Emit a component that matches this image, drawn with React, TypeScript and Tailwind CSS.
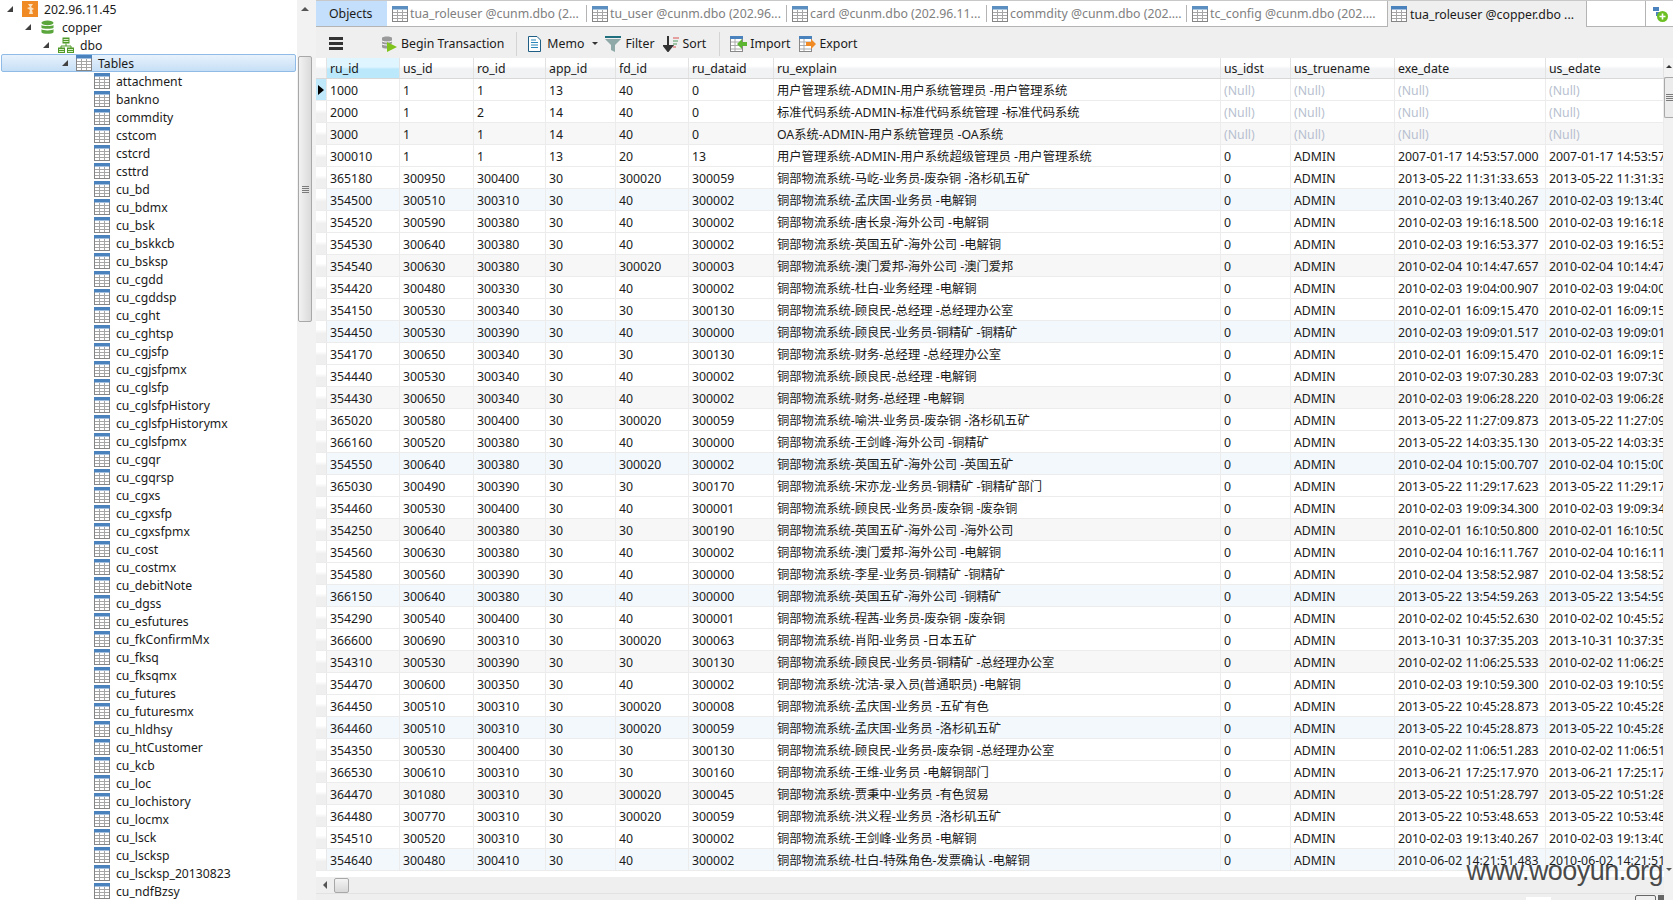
import { Fragment } from "react";

const font = "[font-family:'Noto_Sans','Noto_Sans_CJK_SC',sans-serif]";

const tables = [
  "attachment", "bankno", "commdity", "cstcom", "cstcrd", "csttrd", "cu_bd", "cu_bdmx", "cu_bsk", "cu_bskkcb",
  "cu_bsksp", "cu_cgdd", "cu_cgddsp", "cu_cght", "cu_cghtsp", "cu_cgjsfp", "cu_cgjsfpmx", "cu_cglsfp",
  "cu_cglsfpHistory", "cu_cglsfpHistorymx", "cu_cglsfpmx", "cu_cgqr", "cu_cgqrsp", "cu_cgxs", "cu_cgxsfp",
  "cu_cgxsfpmx", "cu_cost", "cu_costmx", "cu_debitNote", "cu_dgss", "cu_esfutures", "cu_fkConfirmMx", "cu_fksq",
  "cu_fksqmx", "cu_futures", "cu_futuresmx", "cu_hldhsy", "cu_htCustomer", "cu_kcb", "cu_loc", "cu_lochistory",
  "cu_locmx", "cu_lsck", "cu_lscksp", "cu_lscksp_20130823", "cu_ndfBzsy",
];

const tabs = [
  "tua_roleuser @cunm.dbo (2...",
  "tu_user @cunm.dbo (202.96...",
  "card @cunm.dbo (202.96.11...",
  "commdity @cunm.dbo (202....",
  "tc_config @cunm.dbo (202....",
];

const prefix = "铜部物流系统-";

const rows: string[][] = [
  ["1000", "1", "1", "13", "40", "0", "用户管理系统-ADMIN-用户系统管理员 -用户管理系统", "", "", "", ""],
  ["2000", "1", "2", "14", "40", "0", "标准代码系统-ADMIN-标准代码系统管理 -标准代码系统", "", "", "", ""],
  ["3000", "1", "1", "14", "40", "0", "OA系统-ADMIN-用户系统管理员 -OA系统", "", "", "", ""],
  ["300010", "1", "1", "13", "20", "13", "用户管理系统-ADMIN-用户系统超级管理员 -用户管理系统", "0", "ADMIN", "2007-01-17 14:53:57.000", "2007-01-17 14:53:57.000"],
  ["365180", "300950", "300400", "30", "300020", "300059", prefix + "马屹-业务员-废杂铜 -洛杉矶五矿", "0", "ADMIN", "2013-05-22 11:31:33.653", "2013-05-22 11:31:33.653"],
  ["354500", "300510", "300310", "30", "40", "300002", prefix + "孟庆国-业务员 -电解铜", "0", "ADMIN", "2010-02-03 19:13:40.267", "2010-02-03 19:13:40.267"],
  ["354520", "300590", "300380", "30", "40", "300002", prefix + "唐长泉-海外公司 -电解铜", "0", "ADMIN", "2010-02-03 19:16:18.500", "2010-02-03 19:16:18.500"],
  ["354530", "300640", "300380", "30", "40", "300002", prefix + "英国五矿-海外公司 -电解铜", "0", "ADMIN", "2010-02-03 19:16:53.377", "2010-02-03 19:16:53.377"],
  ["354540", "300630", "300380", "30", "300020", "300003", prefix + "澳门爱邦-海外公司 -澳门爱邦", "0", "ADMIN", "2010-02-04 10:14:47.657", "2010-02-04 10:14:47.657"],
  ["354420", "300480", "300330", "30", "40", "300002", prefix + "杜白-业务经理 -电解铜", "0", "ADMIN", "2010-02-03 19:04:00.907", "2010-02-03 19:04:00.907"],
  ["354150", "300530", "300340", "30", "30", "300130", prefix + "顾良民-总经理 -总经理办公室", "0", "ADMIN", "2010-02-01 16:09:15.470", "2010-02-01 16:09:15.470"],
  ["354450", "300530", "300390", "30", "40", "300000", prefix + "顾良民-业务员-铜精矿 -铜精矿", "0", "ADMIN", "2010-02-03 19:09:01.517", "2010-02-03 19:09:01.517"],
  ["354170", "300650", "300340", "30", "30", "300130", prefix + "财务-总经理 -总经理办公室", "0", "ADMIN", "2010-02-01 16:09:15.470", "2010-02-01 16:09:15.470"],
  ["354440", "300530", "300340", "30", "40", "300002", prefix + "顾良民-总经理 -电解铜", "0", "ADMIN", "2010-02-03 19:07:30.283", "2010-02-03 19:07:30.283"],
  ["354430", "300650", "300340", "30", "40", "300002", prefix + "财务-总经理 -电解铜", "0", "ADMIN", "2010-02-03 19:06:28.220", "2010-02-03 19:06:28.220"],
  ["365020", "300580", "300400", "30", "300020", "300059", prefix + "喻洪-业务员-废杂铜 -洛杉矶五矿", "0", "ADMIN", "2013-05-22 11:27:09.873", "2013-05-22 11:27:09.873"],
  ["366160", "300520", "300380", "30", "40", "300000", prefix + "王剑峰-海外公司 -铜精矿", "0", "ADMIN", "2013-05-22 14:03:35.130", "2013-05-22 14:03:35.130"],
  ["354550", "300640", "300380", "30", "300020", "300002", prefix + "英国五矿-海外公司 -英国五矿", "0", "ADMIN", "2010-02-04 10:15:00.707", "2010-02-04 10:15:00.707"],
  ["365030", "300490", "300390", "30", "30", "300170", prefix + "宋亦龙-业务员-铜精矿 -铜精矿部门", "0", "ADMIN", "2013-05-22 11:29:17.623", "2013-05-22 11:29:17.623"],
  ["354460", "300530", "300400", "30", "40", "300001", prefix + "顾良民-业务员-废杂铜 -废杂铜", "0", "ADMIN", "2010-02-03 19:09:34.300", "2010-02-03 19:09:34.300"],
  ["354250", "300640", "300380", "30", "30", "300190", prefix + "英国五矿-海外公司 -海外公司", "0", "ADMIN", "2010-02-01 16:10:50.800", "2010-02-01 16:10:50.800"],
  ["354560", "300630", "300380", "30", "40", "300002", prefix + "澳门爱邦-海外公司 -电解铜", "0", "ADMIN", "2010-02-04 10:16:11.767", "2010-02-04 10:16:11.767"],
  ["354580", "300560", "300390", "30", "40", "300000", prefix + "李星-业务员-铜精矿 -铜精矿", "0", "ADMIN", "2010-02-04 13:58:52.987", "2010-02-04 13:58:52.987"],
  ["366150", "300640", "300380", "30", "40", "300000", prefix + "英国五矿-海外公司 -铜精矿", "0", "ADMIN", "2013-05-22 13:54:59.263", "2013-05-22 13:54:59.263"],
  ["354290", "300540", "300400", "30", "40", "300001", prefix + "程茜-业务员-废杂铜 -废杂铜", "0", "ADMIN", "2010-02-02 10:45:52.630", "2010-02-02 10:45:52.630"],
  ["366600", "300690", "300310", "30", "300020", "300063", prefix + "肖阳-业务员 -日本五矿", "0", "ADMIN", "2013-10-31 10:37:35.203", "2013-10-31 10:37:35.203"],
  ["354310", "300530", "300390", "30", "30", "300130", prefix + "顾良民-业务员-铜精矿 -总经理办公室", "0", "ADMIN", "2010-02-02 11:06:25.533", "2010-02-02 11:06:25.533"],
  ["354470", "300600", "300350", "30", "40", "300002", prefix + "沈洁-录入员(普通职员) -电解铜", "0", "ADMIN", "2010-02-03 19:10:59.300", "2010-02-03 19:10:59.300"],
  ["364450", "300510", "300310", "30", "300020", "300008", prefix + "孟庆国-业务员 -五矿有色", "0", "ADMIN", "2013-05-22 10:45:28.873", "2013-05-22 10:45:28.873"],
  ["364460", "300510", "300310", "30", "300020", "300059", prefix + "孟庆国-业务员 -洛杉矶五矿", "0", "ADMIN", "2013-05-22 10:45:28.873", "2013-05-22 10:45:28.873"],
  ["354350", "300530", "300400", "30", "30", "300130", prefix + "顾良民-业务员-废杂铜 -总经理办公室", "0", "ADMIN", "2010-02-02 11:06:51.283", "2010-02-02 11:06:51.283"],
  ["366530", "300610", "300310", "30", "30", "300160", prefix + "王维-业务员 -电解铜部门", "0", "ADMIN", "2013-06-21 17:25:17.970", "2013-06-21 17:25:17.970"],
  ["364470", "301080", "300310", "30", "300020", "300045", prefix + "贾秉中-业务员 -有色贸易", "0", "ADMIN", "2013-05-22 10:51:28.797", "2013-05-22 10:51:28.797"],
  ["364480", "300770", "300310", "30", "300020", "300059", prefix + "洪义程-业务员 -洛杉矶五矿", "0", "ADMIN", "2013-05-22 10:53:48.653", "2013-05-22 10:53:48.653"],
  ["354510", "300520", "300310", "30", "40", "300002", prefix + "王剑峰-业务员 -电解铜", "0", "ADMIN", "2010-02-03 19:13:40.267", "2010-02-03 19:13:40.267"],
  ["354640", "300480", "300410", "30", "40", "300002", prefix + "杜白-特殊角色-发票确认 -电解铜", "0", "ADMIN", "2010-06-02 14:21:51.483", "2010-06-02 14:21:51.483"],
];

const columns = ["ru_id", "us_id", "ro_id", "app_id", "fd_id", "ru_dataid", "ru_explain", "us_idst", "us_truename", "exe_date", "us_edate"];

function TableIcon({ dim }: { dim?: boolean }) {
  return (
    <svg width="16" height="16" viewBox="0 0 16 16" className="shrink-0">
      <rect x="0.5" y="0.5" width="15" height="15" fill="#fff" stroke="#858585" />
      <rect x="0" y="0" width="16" height="3.5" fill={dim ? "#5b8fc2" : "#4a82bd"} />
      <path d="M1 6.5H15M1 9.5H15M1 12.5H15M5.5 4V15M10.5 4V15" stroke="#a6a6a6" fill="none" />
    </svg>
  );
}

function Arrow() {
  return (
    <svg width="6" height="6" viewBox="0 0 6 6" className="shrink-0">
      <path d="M6 0V6H0Z" fill="#404040" />
    </svg>
  );
}

function TreeLabel({ text, className }: { text: string; className: string }) {
  return <span className={`pt-[2px] text-[12.2px] text-[#1a1a1a] ${className}`}>{text}</span>;
}

function Sidebar() {
  return (
    <div className="flex w-[297px] shrink-0 flex-col overflow-hidden">
      <div className="h-[1px] bg-[#c8c8c8]" />
      <div className="flex h-[18px] items-center pl-[7px]">
        <Arrow />
        <svg width="16" height="16" viewBox="0 0 16 16" className="ml-[9px]">
          <rect width="16" height="16" fill="#f08a24" />
          <path d="M6 3h5l-2 3 3 2-2 1 1 4H7l1-4-3-2 3-1z" fill="#fbe3c2" />
        </svg>
        <TreeLabel text="202.96.11.45" className="ml-[6px]" />
      </div>
      <div className="flex h-[18px] items-center pl-[25px]">
        <Arrow />
        <svg width="13" height="15" viewBox="0 0 14 16" className="ml-[10px]">
          <ellipse cx="7" cy="3" rx="6.5" ry="2.6" fill="#5aa63c" />
          <path d="M0.5 5.2c1 1.6 12 1.6 13 0v3c-1 1.6-12 1.6-13 0zM0.5 10c1 1.6 12 1.6 13 0v3c-1 2.4-12 2.4-13 0z" fill="#5aa63c" />
        </svg>
        <TreeLabel text="copper" className="ml-[8px]" />
      </div>
      <div className="flex h-[18px] items-center pl-[43px]">
        <Arrow />
        <svg width="16" height="16" viewBox="0 0 16 16" className="ml-[9px]">
          <rect x="4.5" y="0.5" width="7" height="6" fill="#4f9a28" />
          <path d="M8 6.5v2.5M3 11V9h10v2" stroke="#4f9a28" fill="none" />
          <rect x="0" y="10.5" width="7" height="5.5" fill="#4f9a28" />
          <rect x="9" y="10.5" width="7" height="5.5" fill="#4f9a28" />
          <path d="M5.5 2.5h5M5.5 4.5h5M1 12.5h5M1 14.5h5M10 12.5h5M10 14.5h5" stroke="#d8edc8" />
        </svg>
        <TreeLabel text="dbo" className="ml-[6px]" />
      </div>
      <div className="ml-[1px] mr-[1px] flex h-[18px] items-center rounded-[2px] border border-[#8fbbe6] bg-gradient-to-b from-[#e8f2fc] to-[#c6dff6] pl-[60px]">
        <Arrow />
        <div className="ml-[8px]"><TableIcon /></div>
        <TreeLabel text="Tables" className="ml-[6px]" />
      </div>
      {tables.map((t) => (
        <div key={t} className="flex h-[18px] items-center pl-[94px]">
          <TableIcon />
          <TreeLabel text={t} className="ml-[6px]" />
        </div>
      ))}
    </div>
  );
}

function VerticalGrip() {
  return (
    <div className="flex flex-col gap-[1px]">
      <div className="h-[1px] w-[7px] bg-[#7a7a7a]" />
      <div className="h-[1px] w-[7px] bg-[#7a7a7a]" />
      <div className="h-[1px] w-[7px] bg-[#7a7a7a]" />
      <div className="h-[1px] w-[7px] bg-[#7a7a7a]" />
    </div>
  );
}

function SidebarScroll() {
  return (
    <div className="flex w-[19px] shrink-0 flex-col bg-[#f2f2f2] pl-[1px] pr-[4px]">
      <div className="flex h-[18px] w-full items-center justify-center">
        <div className="h-0 w-0 border-x-[4px] border-b-[4px] border-x-transparent border-b-[#555]" />
      </div>
      <div className="mt-[38px] flex h-[266px] w-full items-center justify-center rounded-[2px] border border-[#a8a8a8] bg-gradient-to-r from-[#f2f2f2] to-[#dadada]">
        <VerticalGrip />
      </div>
    </div>
  );
}

function ToolButton({ icon, label, className }: { icon: React.ReactNode; label: string; className?: string }) {
  return (
    <div className={`flex items-center ${className ?? ""}`}>
      {icon}
      <span className="pt-[2px] text-[12.3px] text-[#1a1a1a]">{label}</span>
    </div>
  );
}

function Toolbar() {
  return (
    <div className="flex h-[31px] items-center bg-[#efefef] pl-[13px] pt-[2px]">
      <div className="flex w-[14px] flex-col gap-[2px]">
        <div className="h-[3px] bg-[#333]" />
        <div className="h-[3px] bg-[#333]" />
        <div className="h-[3px] bg-[#333]" />
      </div>
      <ToolButton
        className="ml-[38px]"
        label="Begin Transaction"
        icon={
          <svg width="16" height="16" viewBox="0 0 16 16" className="mr-[4px]">
            <path d="M1 2c0-2 10-2 10 0v9c0 2-10 2-10 0z" fill="#9a9a9a" />
            <path d="M1 5c2 1.4 8 1.4 10 0M1 8c2 1.4 8 1.4 10 0" stroke="#fff" fill="none" />
            <path d="M6 6l10 5-10 5z" fill="#7fc31c" />
          </svg>
        }
      />
      <div className="ml-[12px] h-[24px] w-[1px] bg-[#d4d4d4]" />
      <ToolButton
        className="ml-[11px]"
        label="Memo"
        icon={
          <svg width="14" height="16" viewBox="0 0 14 16" className="mr-[5px]">
            <path d="M0.5 0.5H9L12.5 4V15.5H0.5Z" fill="#fff" stroke="#1f5f86" />
            <path d="M3 4h5M3 6.5h7M3 9h7M3 11.5h7" stroke="#2a86b8" />
          </svg>
        }
      />
      <div className="ml-[8px] h-0 w-0 border-x-[3px] border-t-[3px] border-x-transparent border-t-[#333]" />
      <ToolButton
        className="ml-[7px]"
        label="Filter"
        icon={
          <svg width="16" height="16" viewBox="0 0 16 16" className="mr-[4px]">
            <rect x="0" y="0" width="16" height="2" fill="#1f6f7f" />
            <path d="M0 3h16l-6 6v7l-4-2V9z" fill="#8fa8a8" />
          </svg>
        }
      />
      <ToolButton
        className="ml-[8px]"
        label="Sort"
        icon={
          <svg width="16" height="16" viewBox="0 0 16 16" className="mr-[4px]">
            <path d="M5 0v11M1 10l4 5 4-5z" stroke="#333" strokeWidth="2" fill="#333" />
            <path d="M10 2h6" stroke="#d9534f" />
            <path d="M10 5h5M10 8h4" stroke="#4f9a5f" />
            <path d="M10 11h3" stroke="#d9534f" />
          </svg>
        }
      />
      <div className="ml-[13px] h-[24px] w-[1px] bg-[#d4d4d4]" />
      <ToolButton
        className="ml-[10px]"
        label="Import"
        icon={
          <svg width="17" height="16" viewBox="0 0 17 16" className="mr-[3px]">
            <rect x="0.5" y="0.5" width="12" height="15" fill="#fff" stroke="#888" />
            <rect x="0" y="0" width="13" height="3" fill="#4a82bd" />
            <path d="M1 6h11M1 9.500h11M1 13h11M5 3v12" stroke="#aaa" />
            <path d="M17 6v4h-5v3L7 8l5-5v3z" fill="#5cb531" />
          </svg>
        }
      />
      <ToolButton
        className="ml-[9px]"
        label="Export"
        icon={
          <svg width="17" height="16" viewBox="0 0 17 16" className="mr-[3px]">
            <rect x="0.5" y="0.5" width="12" height="15" fill="#fff" stroke="#888" />
            <rect x="0" y="0" width="13" height="3" fill="#4a82bd" />
            <path d="M1 6h11M1 9.500h11M1 13h11M5 3v12" stroke="#aaa" />
            <path d="M7 6v4h5v3l5-5-5-5v3z" fill="#f08a24" />
          </svg>
        }
      />
    </div>
  );
}

function TabBar() {
  return (
    <div className="flex h-[27px] items-stretch border-b border-t border-b-[#b4b4b4] border-t-[#c8c8c8] bg-white">
      <div className="flex w-[71px] items-center bg-[#c4dffb] pl-[13px] pt-[2px] text-[12.3px] text-[#1a1a1a]">Objects</div>
      {tabs.map((t, i) => (
        <Fragment key={t}>
          <div className="flex w-[200px] items-center pl-[5px] text-[12.3px] text-[#808080]">
            <TableIcon dim />
            <span className="ml-[2px] whitespace-nowrap pt-[2px]">{t}</span>
          </div>
          {i < tabs.length - 1 && <div className="my-[4px] -ml-[1px] w-[1px] bg-[#b4b4b4]" />}
        </Fragment>
      ))}
      <div className="-mb-[1px] flex w-[200px] items-center border-x border-[#b4b4b4] bg-[#efefef] pl-[3px] text-[12.3px] text-[#1a1a1a]">
        <TableIcon />
        <span className="ml-[3px] whitespace-nowrap pt-[2px]">tua_roleuser @copper.dbo ...</span>
      </div>
      <div className="w-[58px]" />
      <div className="flex flex-1 items-center justify-center border-l border-[#b4b4b4]">
        <svg width="16" height="16" viewBox="0 0 16 16">
          <path d="M1 1h6v4H1zM4 6h6v4H4z" fill="#4a82bd" />
          <circle cx="10.5" cy="10.5" r="5.5" fill="#6cc024" />
          <path d="M10.500 7.500v6M7.500 10.500h6" stroke="#fff" strokeWidth="1.6" />
        </svg>
      </div>
    </div>
  );
}

const gridCols = "grid-cols-[11px_73px_74px_72px_70px_73px_85px_447px_70px_104px_151px_118px]";

function HeaderRow() {
  return (
    <div className={`grid h-[21px] ${gridCols} border-b border-[#d8d8d8]`}>
      <div className="border-r border-[#e2e2e2] bg-[linear-gradient(#fff_40%,#f1f2f4_55%)]" />
      {columns.map((c, i) => (
        <div
          key={c}
          className={`flex items-center overflow-hidden border-r border-[#e2e2e2] pl-[3px] pt-[2px] text-[12.3px] text-[#1a1a1a] ${
            i === 0 ? "bg-[linear-gradient(#dff5ff_45%,#bbe8fb_55%)]" : "bg-[linear-gradient(#fff_40%,#f1f2f4_55%)]"
          }`}
        >
          {c}
        </div>
      ))}
    </div>
  );
}

function DataRow({ row, index }: { row: string[]; index: number }) {
  const tone = index % 6 === 5 ? "bg-[#f3f8fd]" : index % 6 === 2 ? "bg-[#f7f7f7]" : "bg-white";
  return (
    <div className={`grid h-[22px] ${gridCols} border-b border-[#ececec] ${tone}`}>
      <div
        className={`flex items-center justify-center border-r border-[#e8e8e8] ${
          index === 0 ? "bg-[#bfe8fa]" : "bg-[linear-gradient(#fff_40%,#efefef_60%)]"
        }`}
      >
        {index === 0 && <div className="h-0 w-0 border-y-[5px] border-l-[6px] border-y-transparent border-l-black" />}
      </div>
      {row.map((cell, i) => (
        <div
          key={i}
          className={`flex items-center overflow-hidden whitespace-nowrap border-r border-[#ececec] pl-[3px] pt-[4px] text-[12.3px] ${
            cell === "" ? "text-[#b8bfd0]" : "text-[#1a1a1a]"
          }`}
        >
          {cell === "" ? "(Null)" : cell}
        </div>
      ))}
    </div>
  );
}

function Grid() {
  return (
    <div className="relative flex min-h-0 flex-1 bg-[#efefef]">
      <div className="flex flex-1 flex-col overflow-hidden">
        <div className="bg-white pb-[6px]">
          <HeaderRow />
          {rows.map((r, i) => (
            <DataRow key={r[0]} row={r} index={i} />
          ))}
        </div>
        <div className="flex h-[16px] items-center pl-[7px]">
          <div className="h-0 w-0 border-y-[4px] border-r-[4px] border-y-transparent border-r-[#555]" />
          <div className="ml-[7px] h-[15px] w-[15px] rounded-[2px] border border-[#a8a8a8] bg-gradient-to-b from-[#f4f4f4] to-[#d8d8d8]" />
        </div>
        <div className="flex flex-1 items-start justify-end border-t border-[#e2e2e2]">
          <div className="mr-[84px] mt-[3px] h-full w-[25px] bg-white" />
          <div className="mt-[1px] h-full w-[21px] rounded-t-[2px] border border-[#666]" />
          <div className="ml-[2px] mt-[1px] h-full w-[6px] bg-[#666]" />
        </div>
      </div>
      <div className="flex w-[9px] shrink-0 flex-col items-center bg-[#f2f2f2]">
        <div className="mt-[7px] h-0 w-0 border-x-[3px] border-b-[3px] border-x-transparent border-b-[#333]" />
        <div className="mt-[9px] flex h-[41px] w-full shrink-0 items-center justify-center rounded-l-[2px] border border-r-0 border-[#a8a8a8] bg-[#ececec]">
          <VerticalGrip />
        </div>
        <div className="mt-[750px] h-0 w-0 border-x-[3px] border-t-[3px] border-x-transparent border-t-[#555]" />
      </div>
      <span className="absolute bottom-[15px] right-[10px] text-[27px] leading-none tracking-[-0.55px] text-[#4a4a4a] [font-family:'Liberation_Sans',sans-serif]">
        www.wooyun.org
      </span>
    </div>
  );
}

export default function App() {
  return (
    <div className={`flex h-[900px] w-[1673px] overflow-hidden bg-white ${font}`}>
      <Sidebar />
      <SidebarScroll />
      <div className="flex min-w-0 flex-1 flex-col">
        <TabBar />
        <Toolbar />
        <Grid />
      </div>
    </div>
  );
}
